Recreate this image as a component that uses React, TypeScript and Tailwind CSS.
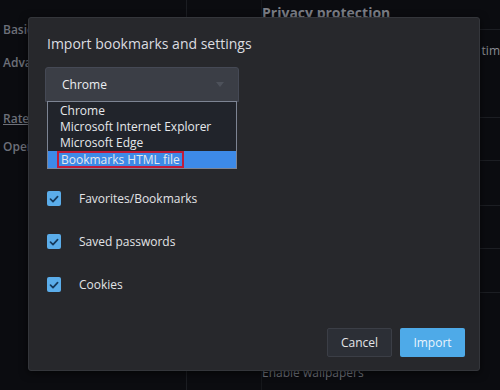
import React, { useState } from 'react';

const font = { fontFamily: '"Open Sans", "Noto Sans", Arial, sans-serif' };

const options = ['Chrome', 'Microsoft Internet Explorer', 'Microsoft Edge', 'Bookmarks HTML file'];

const items = ['Favorites/Bookmarks', 'Saved passwords', 'Cookies'];

const Check: React.FC = () => (
  <div className="w-[14px] h-[15px] rounded-[2px] bg-[#5badea] flex items-center justify-center">
    <svg width="10" height="10" viewBox="0 0 10 10" fill="none">
      <path d="M1.5 5.2 L4 7.6 L8.6 2.6" stroke="#163a5c" strokeWidth="1.7" strokeLinecap="round" strokeLinejoin="round" />
    </svg>
  </div>
);

export default function App() {
  const [checked] = useState([true, true, true]);

  return (
    <div className="relative w-[500px] h-[390px] overflow-hidden bg-[#0b0c10]" style={font}>
      {/* page behind the dialog */}
      <div className="flex h-full">
        <div className="w-[187px] shrink-0 border-r border-[#1b1d22] flex flex-col pl-[3px] text-[12px] text-[#6d7079] font-semibold">
          <div className="mt-[21px]">Basic</div>
          <div className="mt-[15px]">Advanced</div>
          <div className="mt-[38px] underline">Rate Opera</div>
          <div className="mt-[10px]">Open</div>
        </div>
        <div className="w-[75px] shrink-0 border-r border-[#15171b]" />
        <div className="flex-1 flex flex-col">
          <div className="h-[30px] border-b border-[#1c1e23] text-[14px] font-bold text-[#7b7e86] pt-[2px]">Privacy protection</div>
          <div className="h-[88px] border-b border-[#1c1e23] flex justify-end pt-[12px] text-[12px] text-[#8a8d94]">tim</div>
          <div className="h-[43px] border-b border-[#1c1e23]" />
          <div className="h-[45px] border-b border-[#1c1e23]" />
          <div className="h-[43px] border-b border-[#1c1e23]" />
          <div className="h-[44px] border-b border-[#1c1e23]" />
          <div className="flex-1 flex items-end pb-[8px] text-[12px] text-[#6d7079]">Enable wallpapers</div>
        </div>
      </div>

      {/* dialog */}
      <div className="absolute left-[28px] top-[17px] w-[452px] h-[354px] bg-[#27282c] border border-[#34363b] rounded-[3px] shadow-[0_2px_8px_rgba(0,0,0,0.6)] flex flex-col">
        <div className="pl-[18px] pt-[16px] text-[14px] text-[#dcdde0] leading-[20px]">Import bookmarks and settings</div>

        <div className="ml-[16px] mt-[13px] w-[194px] relative">
          <div className="h-[35px] bg-[#3b3e46] border border-[#454955] rounded-t-[3px] flex items-center justify-between pl-[16px] pr-[14px] text-[12px] text-[#eceef2]">
            <span>Chrome</span>
            <svg width="8" height="5" viewBox="0 0 8 5">
              <path d="M0 0 L8 0 L4 5 Z" fill="#4d515a" />
            </svg>
          </div>
          <div className="absolute left-[2px] top-[34px] w-[190px] bg-[#21242b] border border-[#7d8493] flex flex-col text-[12px] text-[#e6e8ec] leading-[16px] pt-[1px] z-10">
            {options.map((o, i) =>
              i === options.length - 1 ? (
                <div key={o} className="bg-[#3d8ae8] h-[17px] flex items-center">
                  <span className="ml-[9px] border-2 border-[#c01c3a] px-[2px] leading-[13px]">{o}</span>
                </div>
              ) : (
                <div key={o} className="pl-[12px] h-[16px]">{o}</div>
              )
            )}
          </div>
        </div>

        <div className="ml-[18px] mt-[89px] flex flex-col gap-[28px]">
          {items.map((label, i) => (
            <div key={label} className="flex items-center gap-[18px] h-[15px]">
              {checked[i] && <Check />}
              <span className="text-[12px] text-[#e2e3e6]">{label}</span>
            </div>
          ))}
        </div>

        <div className="mt-auto mb-[13px] mr-[14px] flex justify-end gap-[8px]">
          <button className="w-[65px] h-[29px] bg-[#2c2f36] border border-[#3b3e46] rounded-[2px] text-[12px] text-[#e4e5e8]">Cancel</button>
          <button className="w-[65px] h-[29px] bg-[#4eaae8] rounded-[2px] text-[12px] text-[#eaf5fd]">Import</button>
        </div>
      </div>
    </div>
  );
}
